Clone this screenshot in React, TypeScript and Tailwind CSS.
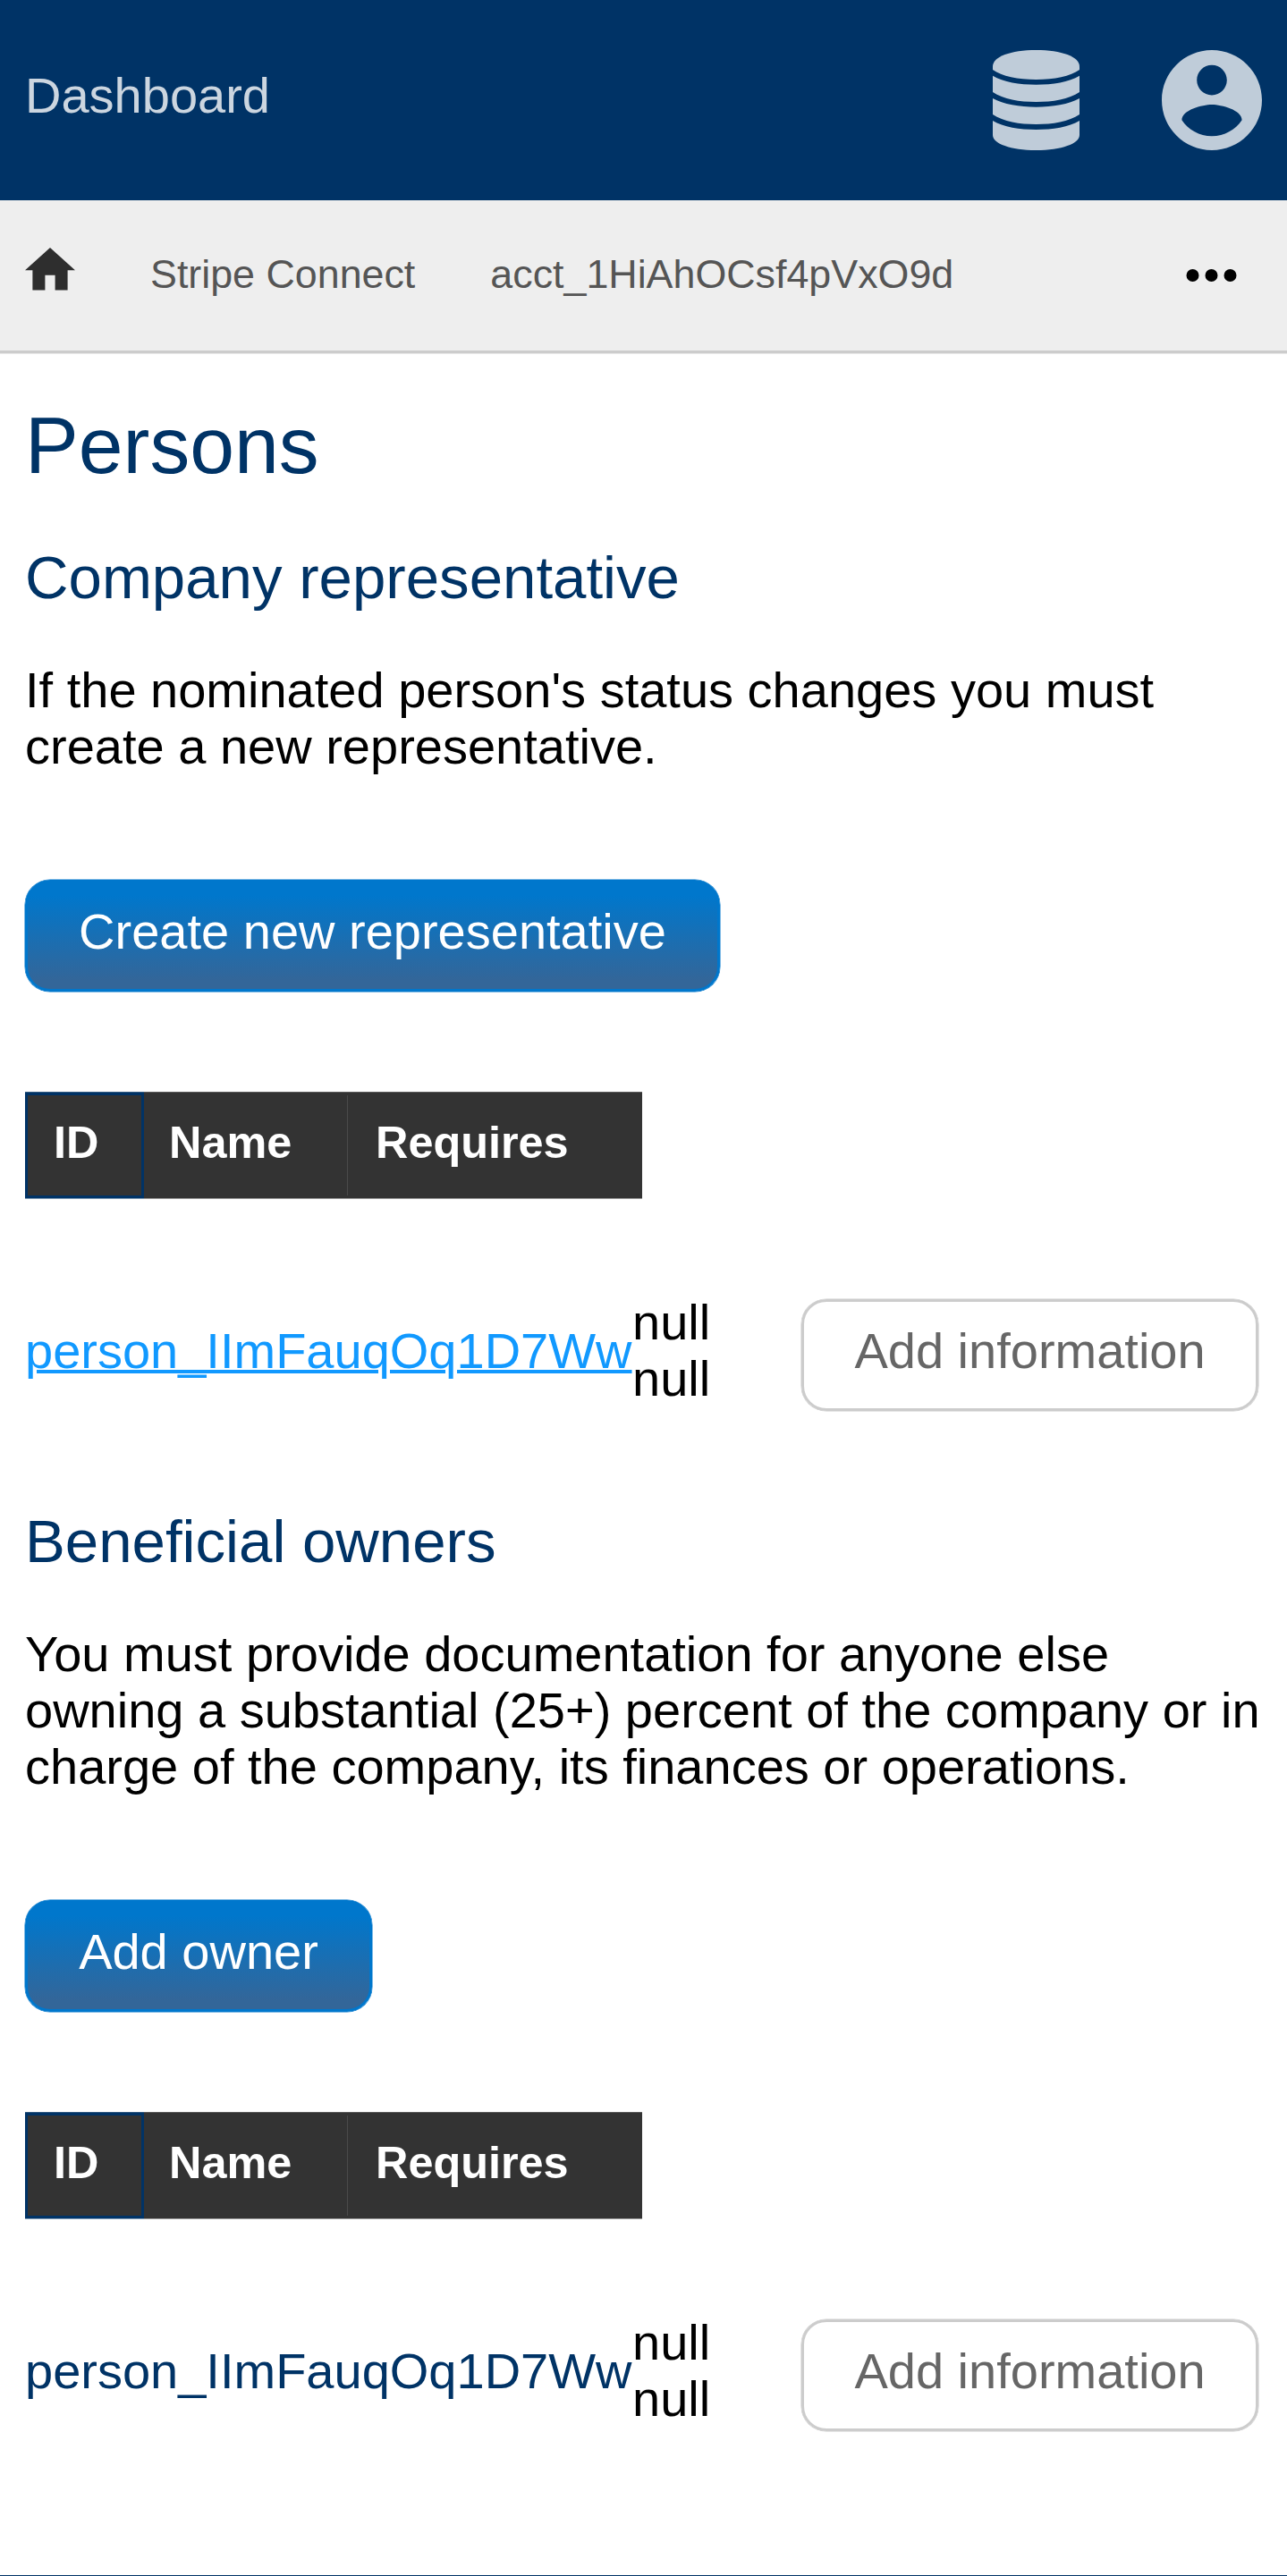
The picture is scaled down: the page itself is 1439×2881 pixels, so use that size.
import React from "react";

const cell = "h-[120px] shrink-0 border-t border-b border-t-[#5c5c5c] border-b-[#999] bg-[#333] pt-[26px]";

function BlueButton({ label, width }: { label: string; width: string }) {
  return (
    <button
      className={`${width} mt-[118px] block h-[125px] rounded-[28px] border-[3px] border-[#0077cc] bg-[linear-gradient(#0077cc_12%,#336699_92%)] pb-[10px] text-center text-white shadow-[0_0_0_0.5px_#0077cc]`}
    >
      {label}
    </button>
  );
}

function PersonsTable({ link }: { link?: boolean }) {
  return (
    <>
      <div className="mt-[112px] flex h-[120px] text-[50.4px] leading-[60px] font-bold text-white">
        <div className="h-[120px] w-[133px] shrink-0 border-t border-b border-t-[#33597f] border-b-[#7f99b2]">
          <div className="h-[118px] border-[3px] border-[#003366] bg-[#333] pt-[23px] pl-[29px]">ID</div>
        </div>
        <div className={`${cell} w-[227px] pl-[28px]`}>Name</div>
        <div className={`${cell} flex w-[330px] pl-0`}>
          <div className="-mt-[23px] mr-[31px] h-[112px] w-px bg-[#4a4a4a]" />
          Requires
        </div>
      </div>
      <div className="mt-[111px] flex h-[127px] items-center">
        <a
          className={
            link
              ? "w-[679px] pb-[10px] text-[#1199ff] underline decoration-[3.5px]"
              : "w-[679px] pb-[10px] text-[#003366]"
          }
        >
          person_IImFauqOq1D7Ww
        </a>
        <span className="w-[189px] pr-[100px] pb-[11px]">null null</span>
        <button className="h-[125px] w-[511px] rounded-[28px] border-[3px] border-[#ccc] pb-[10px] text-[#666] shadow-[0_0_0_0.5px_#ccc]">
          Add information
        </button>
      </div>
    </>
  );
}

function Header() {
  return (
    <header className="flex h-[224px] items-center bg-[#003366] pr-[28px] pl-[28px]">
      <span className="pb-[12px] text-[#ccd6e0]">Dashboard</span>
      <svg className="ml-auto h-[112px] w-[97px]" viewBox="90 168 290 336" preserveAspectRatio="none" fill="#bfccd9">
        <path d="M90 223C90 190 150 168 235 168S380 190 380 223V234C350 256 295 267 235 267S120 256 90 234Z" />
        <path d="M90 254C125 275 180 284 235 284S345 275 380 254V309C345 333 290 342 235 342S125 333 90 309Z" />
        <path d="M90 330C125 350 180 359 235 359S345 350 380 330V384C345 408 290 417 235 417S125 408 90 384Z" />
        <path d="M90 405C125 426 180 435 235 435S345 426 380 405V453C380 482 320 504 235 504S90 482 90 453Z" />
      </svg>
      <svg className="ml-[92px] size-[112px]" viewBox="2 2 20 20" fill="#bfccd9">
        <path d="M12 2C6.48 2 2 6.48 2 12s4.48 10 10 10 10-4.48 10-10S17.52 2 12 2zm0 3c1.66 0 3 1.34 3 3s-1.34 3-3 3-3-1.34-3-3 1.34-3 3-3zm0 14.2c-2.5 0-4.71-1.28-6-3.22.03-1.99 4-3.08 6-3.08 1.99 0 5.97 1.09 6 3.08-1.29 1.94-3.5 3.22-6 3.22z" />
      </svg>
    </header>
  );
}

function Breadcrumbs() {
  return (
    <nav className="flex h-[171px] items-start border-b-[3px] border-[#ccc] bg-[#eee] pl-[28px] text-[44.8px] leading-[52px] text-[#555]">
      <svg className="mt-[53px] h-[48px] w-[56px]" viewBox="2 3 20 17.14" fill="#2e2e2e">
        <path d="M10 20v-6h4v6h5v-8h3L12 3 2 12h3v8z" />
      </svg>
      <span className="mt-[56px] ml-[84px]">Stripe Connect</span>
      <span className="mt-[56px] ml-[84px]">acct_1HiAhOCsf4pVxO9d</span>
      <svg className="mt-[77px] mr-[56px] ml-auto h-[14px] w-[57px]" viewBox="0 0 57 14" fill="#000">
        <circle cx="7.5" cy="7" r="7" />
        <circle cx="28.5" cy="7" r="7" />
        <circle cx="49.5" cy="7" r="7" />
      </svg>
    </nav>
  );
}

export default function App() {
  return (
    <div className="flex h-[2881px] flex-col overflow-hidden bg-white font-['Liberation_Sans',Arial,sans-serif] text-[56px] leading-[63px] text-black">
      <Header />
      <Breadcrumbs />
      <div className="h-px bg-[#e8e8e8]" />
      <main className="px-[28px]">
        <h1 className="mt-[52px] text-[89.6px] leading-[100px] text-[#003366]">Persons</h1>
        <h2 className="mt-[60px] text-[67.2px] leading-[76px] text-[#003366]">Company representative</h2>
        <p className="mt-[56px]">If the nominated person's status changes you must create a new representative.</p>
        <BlueButton label="Create new representative" width="w-[777px]" />
        <PersonsTable link />
        <h2 className="mt-[107px] text-[67.2px] leading-[76px] text-[#003366]">Beneficial owners</h2>
        <p className="mt-[56px]">
          You must provide documentation for anyone else owning a substantial (25+) percent of the company or in
          charge of the company, its finances or operations.
        </p>
        <BlueButton label="Add owner" width="w-[388px]" />
        <PersonsTable />
      </main>
      <div className="mt-auto h-px bg-[#003366]" />
    </div>
  );
}
